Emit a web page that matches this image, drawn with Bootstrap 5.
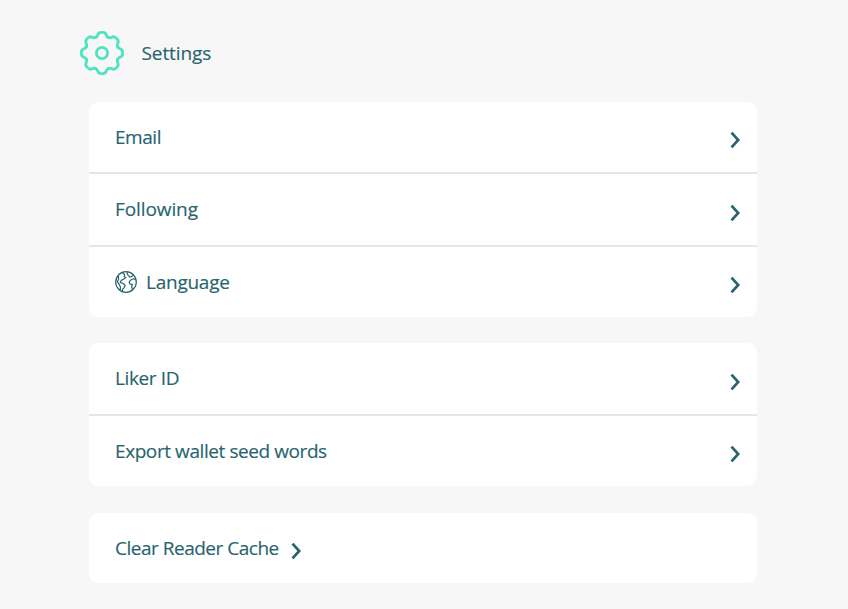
<!DOCTYPE html>
<html lang="en">
<head>
<meta charset="utf-8">
<meta name="viewport" content="width=device-width, initial-scale=1">
<title>Settings</title>
<link href="https://cdn.jsdelivr.net/npm/bootstrap@5.3.0/dist/css/bootstrap.min.css" rel="stylesheet">
<style>
body{background:#f7f7f7;color:#28646e;font-family:"Segoe UI","Open Sans","Noto Sans",sans-serif;font-size:19px;line-height:26px;-webkit-text-stroke:.15px #28646e}
.page{width:668px;margin-left:89px;padding-top:31px}
.page-head{height:44px;margin-left:-9px;margin-bottom:27px;gap:17.5px}
.page-title{font-size:19px;line-height:26px;letter-spacing:-.1px}
.group{border-radius:9px;overflow:hidden;margin-bottom:26px}
.group .list-group-item{height:72px;padding:0 16px 0 26px;border:0;border-bottom:2px solid #e6e6e6;color:inherit;background:#fff}
.group .list-group-item.tall{height:73px;padding-bottom:1px}
.group .list-group-item:last-child{height:70px;border-bottom:0}
.group-wallet{margin-bottom:27px}
.chev{width:11px;height:18px;margin-top:6px}
.tall .chev{margin-top:7px}
.group-wallet .tall .chev{margin-top:8px}
.chev-near{margin-left:12px}
.lang-label{gap:9px}
.t-email{letter-spacing:-.45px}
.t-follow{letter-spacing:-.1px}
.t-lang{letter-spacing:-.25px}
.t-liker{letter-spacing:-.38px}
.t-export{letter-spacing:-.42px}
.t-clear{letter-spacing:-.49px}
</style>
</head>
<body>
<main class="page">
<svg width="0" height="0" class="position-absolute" aria-hidden="true"><defs>
<path id="chevron" d="M1.5 1.7 8.2 9 1.5 16.3" fill="none" stroke="#28646e" stroke-width="2.7"/>
<path id="tooth" d="M-6.4-15.5C-2.8-17-5.6-20.6-.8-20.6H.8C5.6-20.6 2.8-17 6.4-15.5"/>
</defs></svg>
<header class="page-head d-flex align-items-center">
<svg width="44" height="44" viewBox="-22 -22 44 44" fill="none" stroke="#50e3c2" stroke-width="2.8" stroke-linecap="round" stroke-linejoin="round"><use href="#tooth"/><use href="#tooth" transform="rotate(45)"/><use href="#tooth" transform="rotate(90)"/><use href="#tooth" transform="rotate(135)"/><use href="#tooth" transform="rotate(180)"/><use href="#tooth" transform="rotate(225)"/><use href="#tooth" transform="rotate(270)"/><use href="#tooth" transform="rotate(315)"/><circle r="5.6"/></svg>
<h1 class="m-0 fw-normal page-title">Settings</h1>
</header>
<div class="list-group group">
<a class="list-group-item d-flex align-items-center justify-content-between"><span class="t-email">Email</span><svg class="chev"><use href="#chevron"/></svg></a>
<a class="list-group-item tall d-flex align-items-center justify-content-between"><span class="t-follow">Following</span><svg class="chev"><use href="#chevron"/></svg></a>
<a class="list-group-item d-flex align-items-center justify-content-between"><span class="d-flex align-items-center lang-label"><svg width="22" height="22" viewBox="0 0 22 22" fill="none" stroke="#28646e" stroke-width="1.2" stroke-linejoin="round"><circle cx="11" cy="11" r="10.3"/><path d="M7.2 1.5 9.5 3.5 9.2 5.5 10.8 6.6 8.4 8.3 6.2 9.4 5.2 11.4 8.2 12.5 10.1 14.4 9 16.8 7.7 18.2 7.4 20.5M3.3 4.7 3.6 8.5 2.3 10.6 4.3 13.6 5.4 16 5.3 19M12.3.9 12.2 3.2 14.8 6.2 17 5.3 18.5 4M21 8.6 18.5 7.8 15.5 9.2 14.1 11.3 15.3 13.1 17.5 13.3 16.6 16.1 17.6 18.5"/></svg><span class="t-lang">Language</span></span><svg class="chev"><use href="#chevron"/></svg></a>
</div>
<div class="list-group group group-wallet">
<a class="list-group-item tall d-flex align-items-center justify-content-between"><span class="t-liker">Liker ID</span><svg class="chev"><use href="#chevron"/></svg></a>
<a class="list-group-item d-flex align-items-center justify-content-between"><span class="t-export">Export wallet seed words</span><svg class="chev"><use href="#chevron"/></svg></a>
</div>
<div class="list-group group mb-0">
<a class="list-group-item d-flex align-items-center"><span class="t-clear">Clear Reader Cache</span><svg class="chev chev-near"><use href="#chevron"/></svg></a>
</div>
</main>
<script src="https://cdn.jsdelivr.net/npm/bootstrap@5.3.0/dist/js/bootstrap.bundle.min.js"></script>
</body>
</html>
